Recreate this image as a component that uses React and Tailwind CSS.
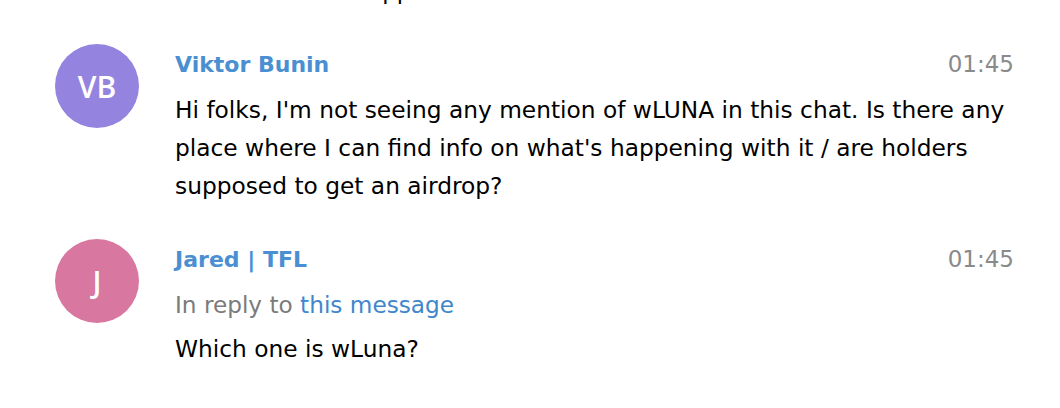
import React from 'react';

const messages = [
    {
        id: 1,
        initials: 'VB',
        avatar: 'bg-[#9484e0]',
        name: 'Viktor Bunin',
        time: '01:45',
        lines: [
            "Hi folks, I'm not seeing any mention of wLUNA in this chat. Is there any",
            "place where I can find info on what's happening with it / are holders",
            'supposed to get an airdrop?',
        ],
    },
    {
        id: 2,
        initials: 'J',
        avatar: 'bg-[#d877a0]',
        name: 'Jared | TFL',
        time: '01:45',
        replyTo: 'this message',
        lines: ['Which one is wLuna?'],
    },
];

function Message({ msg, className }) {
    return (
        <div className={`flex items-start pl-[55px] pr-[46px] ${className}`}>
            {/* Avatar */}
            <div
                className={`w-[84px] h-[84px] shrink-0 rounded-full ${msg.avatar} flex items-center justify-center text-white text-[30px] font-semibold font-['Open_Sans',sans-serif]`}
            >
                {msg.initials}
            </div>

            <div className="ml-[36px] flex-1 min-w-0">
                {/* Name + time */}
                <div className="mt-[5px] flex items-baseline justify-between">
                    <span className="text-[22px] leading-[30px] font-bold text-[#4b8fd3]">{msg.name}</span>
                    <span className="text-[23px] leading-[30px] text-[#8a8a8a]">{msg.time}</span>
                </div>

                {msg.replyTo && (
                    <div className="mt-[11px] text-[23.2px] leading-[38px] text-[#7b7b7b]">
                        In reply to <span className="text-[#3f87cc]">{msg.replyTo}</span>
                    </div>
                )}

                <div className={`${msg.replyTo ? 'mt-[6px]' : 'mt-[11px]'} text-[23.3px] leading-[38px] text-black`}>
                    {msg.lines.map((line, i) => (
                        <div key={i} className="whitespace-nowrap">{line}</div>
                    ))}
                </div>
            </div>
        </div>
    );
}

export default function App() {
    return (
        <div className="w-[1060px] h-[408px] bg-white overflow-hidden font-['DejaVu_Sans',sans-serif]">
            {/* tail of the previous message, scrolled mostly out of view */}
            <div className="-mt-[28px] pl-[175px] h-[38px] text-[23px] leading-[38px] text-black whitespace-nowrap">
                Hmm what will happen?
            </div>

            <Message msg={messages[0]} className="mt-[34px]" />
            <Message msg={messages[1]} className="mt-[34px]" />
        </div>
    );
}
